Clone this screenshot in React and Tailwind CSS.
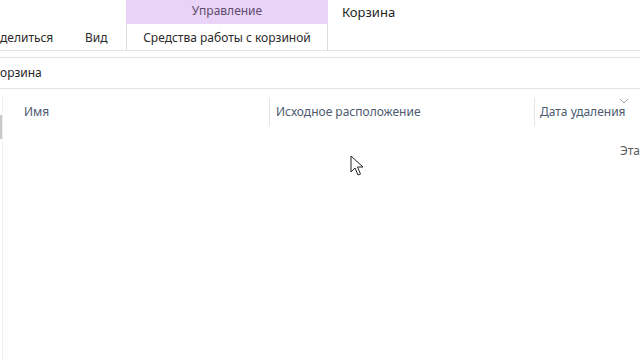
import React from "react";

export default function App() {
  const font = { fontFamily: '"Noto Sans", "Open Sans", sans-serif' };

  return (
    <div className="w-[640px] h-[360px] bg-white overflow-hidden relative text-[12px]" style={font}>
      {/* ribbon tabs */}
      <div className="flex h-[51px] border-b border-[#e3e3e3] text-[#2b2b2b]">
        <div className="flex items-end pb-[3px] h-full">
          <span className="w-[85px]">делиться</span>
          <span className="w-[41px]">Вид</span>
        </div>
        <div className="flex flex-col w-[202px]">
          <div className="h-[24px] bg-[#e9d3f7] flex items-center justify-center pb-[3px] text-[#5d4c6c]">Управление</div>
          <div className="flex-1 border-l border-r border-[#dcdcdc] flex items-center justify-center pt-[1px] text-[#2b2b2b]">
            Средства работы с корзиной
          </div>
        </div>
        <div className="pl-[14px] pt-[3px] text-[13px] text-[#1f1f1f]">Корзина</div>
      </div>

      {/* address bar */}
      <div className="mt-[6px] h-[32px] border-t border-b border-[#e3e3e3] flex items-center text-[#1f1f1f]">
        <span>орзина</span>
      </div>

      {/* file list */}
      <div className="flex mt-[6px] h-[265px]">
        <div className="w-[4px] border-r border-[#f0f0f0] relative">
          <div className="absolute left-0 top-[20px] w-[2px] h-[24px] bg-[#c8c8c8]" />
        </div>
        <div className="flex-1 flex flex-col">
          <div className="flex h-[34px] items-center text-[#4d5a70] relative">
            <div className="w-[266px] pl-[21px]">Имя</div>
            <div className="w-[265px] h-[28px] border-l border-[#e5e5e5] pl-[6px] flex items-center">Исходное расположение</div>
            <div className="flex-1 h-[28px] border-l border-[#e5e5e5] pl-[5px] flex items-center">Дата удаления</div>
            <svg className="absolute left-[616px] top-[3px]" width="10" height="6" viewBox="0 0 10 6">
              <path d="M1 1 L5 5 L9 1" fill="none" stroke="#9aa0a8" strokeWidth="1" />
            </svg>
          </div>
          <div className="pt-[13px] pl-[617px] text-[#5a5a5a] whitespace-nowrap">
            <span>Эта</span>
          </div>
        </div>
      </div>

      {/* mouse cursor */}
      <svg className="absolute left-[350px] top-[155px]" width="14" height="22" viewBox="0 0 14 22">
        <path d="M1 1 L1 17 L5 13 L8 20 L10.5 19 L7.5 12 L13 12 Z" fill="#ffffff" stroke="#222222" strokeWidth="1" strokeLinejoin="round" />
      </svg>
    </div>
  );
}
